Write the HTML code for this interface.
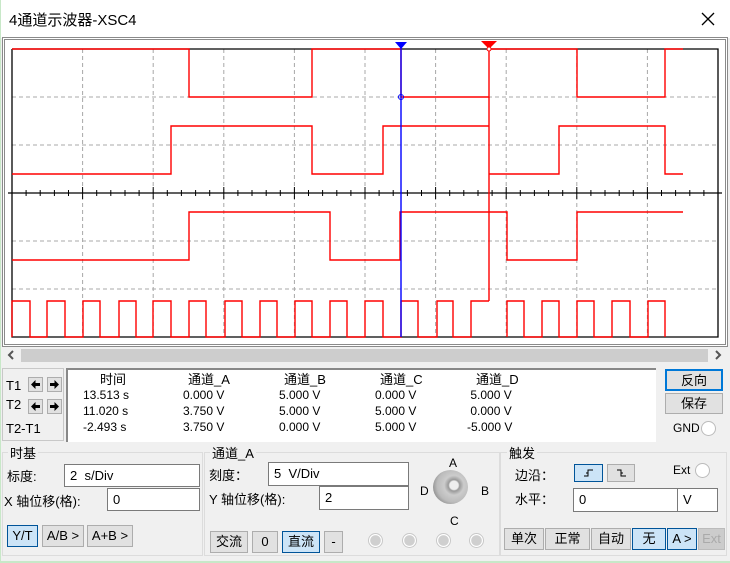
<!DOCTYPE html>
<html><head><meta charset="utf-8"><style>
*{margin:0;padding:0;box-sizing:border-box}
body{width:730px;height:563px;background:#f0f0f0;font-family:"Liberation Sans","Noto Sans CJK SC",sans-serif;font-size:13px;color:#000;position:relative;overflow:hidden}
.a{position:absolute;white-space:nowrap}
.btn{position:absolute;background:#e1e1e1;border:1px solid #adadad;text-align:center;font-size:13px;line-height:20px}
.blue{background:#cce4f7;border-color:#005499}
.inp{position:absolute;background:#fff;border:1px solid #7a7a7a;padding-left:5px;font-size:13px}
.grp{position:absolute;border:1px solid #dcdcdc}
.rad{position:absolute;width:15px;height:15px;border-radius:50%;border:1px solid #bbb;background:#fff}
.dot{position:absolute;width:15px;height:15px;border-radius:50%;border:1px solid #c8c8c8;background:radial-gradient(#cfcfcf 55%,#fff 60%)}
.ab svg{display:block;margin:1px auto}
</style></head><body>
<div class="a" style="left:0;top:0;width:730px;height:38px;background:#fff"></div>
<div class="a" style="left:0;top:0;width:1px;height:563px;background:#c8e8c8"></div>
<div class="a" style="left:9px;top:9px;font-size:15px">4通道示波器-XSC4</div>
<svg class="a" style="left:700px;top:11px" width="16" height="16"><path d="M2 2L14 14M14 2L2 14" stroke="#000" stroke-width="1.3"/></svg>

<div class="a" style="left:2px;top:37px;width:726px;height:310px;border:3px double #8a8a8a;background:#fff"></div>
<svg class="a" style="left:0;top:0" width="730" height="350">
<g stroke="#a8a8a8" stroke-dasharray="4,3" stroke-width="1">
<path d="M82.6 49V337M153.2 49V337M223.8 49V337M294.4 49V337M365 49V337M435.6 49V337M506.2 49V337M576.8 49V337M647.4 49V337"/>
<path d="M12 97H718M12 145H718M12 241H718M12 289H718"/>
</g>
<g stroke="#000" stroke-width="1.3" fill="none">
<path d="M12 49H718V337H12V49"/>
<path d="M8 193H722"/>
</g>
<g stroke="#000" stroke-width="1">
<path d="M26.1 190V196M40.2 190V196M54.4 190V196M68.5 190V196M82.6 187V199M96.7 190V196M110.8 190V196M125 190V196M139.1 190V196M153.2 187V199M167.3 190V196M181.4 190V196M195.6 190V196M209.7 190V196M223.8 187V199M237.9 190V196M252 190V196M266.2 190V196M280.3 190V196M294.4 187V199M308.5 190V196M322.6 190V196M336.8 190V196M350.9 190V196M365 187V199M379.1 190V196M393.2 190V196M407.4 190V196M421.5 190V196M435.6 187V199M449.7 190V196M463.8 190V196M478 190V196M492.1 190V196M506.2 187V199M520.3 190V196M534.4 190V196M548.6 190V196M562.7 190V196M576.8 187V199M590.9 190V196M605 190V196M619.2 190V196M633.3 190V196M647.4 187V199M661.5 190V196M675.6 190V196M689.8 190V196M703.9 190V196"/>
</g>
<g stroke="#f00" stroke-width="1.4" fill="none">
<path d="M12 49H189V97H312V49H401V97H489V49H577V97H665V49H683"/>
<path d="M12 174H171V126H312V174H383V126H489"/>
<path d="M489 97V301M489 174H559V126H665V174H683"/>
<path d="M12 260H189V212H330V260H400V212H507V260H577V212H683"/>
<path d="M12 337V301H30V337H47V301H65V337H83V301H100V337H119V301H136V337H153V301H171V337H189V301H206V337H225V301H242V337H260V301H277V337H295V301H312V337H330V301H347V337H365V301H383V337H401V301H418V337H437V301H453V337H471V301H489M507 337V301H524V337H542V301H559V337H577V301H594V337H612V301H630V337H648V301H665V337"/>
</g>
<path d="M401 44V337" stroke="#00f" stroke-width="1.4"/>
<circle cx="401" cy="97" r="2.5" fill="none" stroke="#00f"/>
<path d="M395 42H407L401 49Z" fill="#00f"/>
<path d="M481 41H497L489 49Z" fill="#f00"/>
<circle cx="489" cy="49" r="2" fill="#fff" stroke="#f00"/>
</svg>

<div class="a" style="left:2px;top:348px;width:726px;height:16px;background:#f0f0f0"></div>
<div class="a" style="left:21px;top:349px;width:687px;height:13px;background:#cdcdcd"></div>
<svg class="a" style="left:6px;top:350px" width="10" height="10"><path d="M7 1L3 5L7 9" stroke="#555" stroke-width="2" fill="none"/></svg>
<svg class="a" style="left:713px;top:350px" width="10" height="10"><path d="M3 1L7 5L3 9" stroke="#555" stroke-width="2" fill="none"/></svg>

<div class="a" style="left:2px;top:368px;width:62px;height:73px;border:1px solid #c8c8c8"></div>
<div class="a" style="left:6px;top:378px">T1</div>
<div class="a" style="left:6px;top:397px">T2</div>
<div class="a" style="left:6px;top:421px">T2-T1</div>
<div class="btn ab" style="left:28px;top:377px;width:15px;height:15px"><svg width="11" height="11"><path d="M1 5.5L5.5 1V4H10V7H5.5V10Z"/></svg></div>
<div class="btn ab" style="left:47px;top:377px;width:15px;height:15px"><svg width="11" height="11"><path d="M10 5.5L5.5 1V4H1V7H5.5V10Z"/></svg></div>
<div class="btn ab" style="left:28px;top:399px;width:15px;height:15px"><svg width="11" height="11"><path d="M1 5.5L5.5 1V4H10V7H5.5V10Z"/></svg></div>
<div class="btn ab" style="left:47px;top:399px;width:15px;height:15px"><svg width="11" height="11"><path d="M10 5.5L5.5 1V4H1V7H5.5V10Z"/></svg></div>
<div class="a" style="left:66px;top:368px;width:590px;height:74px;background:#fff;border-top:2px solid #888;border-left:2px solid #888"></div>
<div class="a" style="left:100px;top:369px">时间</div>
<div class="a" style="left:188px;top:369px">通道_A</div>
<div class="a" style="left:284px;top:369px">通道_B</div>
<div class="a" style="left:380px;top:369px">通道_C</div>
<div class="a" style="left:476px;top:369px">通道_D</div>
<div class="a" style="left:83px;top:387px;font-size:12px;line-height:16px">13.513 s<br>11.020 s<br>-2.493 s</div>
<div class="a" style="left:183px;top:387px;font-size:12px;line-height:16px">0.000 V<br>3.750 V<br>3.750 V</div>
<div class="a" style="left:279px;top:387px;font-size:12px;line-height:16px">5.000 V<br>5.000 V<br>0.000 V</div>
<div class="a" style="left:375px;top:387px;font-size:12px;line-height:16px">0.000 V<br>5.000 V<br>5.000 V</div>
<div class="a" style="left:467px;top:387px;font-size:12px;line-height:16px">&nbsp;5.000 V<br>&nbsp;0.000 V<br>-5.000 V</div>
<div class="btn" style="left:665px;top:369px;width:58px;height:22px;border:2px solid #0078d7">反向</div>
<div class="btn" style="left:665px;top:393px;width:58px;height:21px">保存</div>
<div class="a" style="left:673px;top:421px;font-size:12px">GND</div>
<div class="rad" style="left:701px;top:421px"></div>

<div class="grp" style="left:2px;top:452px;width:201px;height:104px"></div>
<div class="a" style="left:8px;top:443px;background:#f0f0f0;padding:0 2px">时基</div>
<div class="a" style="left:7px;top:466px">标度:</div>
<div class="inp" style="left:64px;top:464px;width:136px;height:23px;line-height:21px">2&nbsp; s/Div</div>
<div class="a" style="left:4px;top:491px">X 轴位移(格):</div>
<div class="inp" style="left:107px;top:488px;width:93px;height:23px;line-height:21px">0</div>
<div class="btn blue" style="left:7px;top:525px;width:31px;height:22px">Y/T</div>
<div class="btn" style="left:42px;top:525px;width:42px;height:22px">A/B &gt;</div>
<div class="btn" style="left:87px;top:525px;width:46px;height:22px">A+B &gt;</div>

<div class="grp" style="left:204px;top:452px;width:296px;height:104px"></div>
<div class="a" style="left:210px;top:443px;background:#f0f0f0;padding:0 2px">通道_A</div>
<div class="a" style="left:209px;top:465px">刻度：</div>
<div class="inp" style="left:268px;top:462px;width:141px;height:24px;line-height:22px">5&nbsp; V/Div</div>
<div class="a" style="left:209px;top:489px">Y 轴位移(格):</div>
<div class="inp" style="left:319px;top:486px;width:90px;height:24px;line-height:22px">2</div>
<div class="a" style="left:449px;top:456px;font-size:12px">A</div>
<div class="a" style="left:420px;top:484px;font-size:12px">D</div>
<div class="a" style="left:481px;top:484px;font-size:12px">B</div>
<div class="a" style="left:450px;top:514px;font-size:12px">C</div>
<div class="a" style="left:433px;top:470px;width:35px;height:34px;border-radius:50%;background:radial-gradient(circle at 60% 45%,#eee 15%,#999 20%,#ccc 35%,#bbb 60%,#666 95%)"></div>
<div class="btn" style="left:210px;top:531px;width:38px;height:22px">交流</div>
<div class="btn" style="left:252px;top:531px;width:26px;height:22px">0</div>
<div class="btn blue" style="left:282px;top:531px;width:38px;height:22px">直流</div>
<div class="btn" style="left:324px;top:531px;width:19px;height:22px">-</div>
<div class="dot" style="left:368px;top:533px"></div>
<div class="dot" style="left:402px;top:533px"></div>
<div class="dot" style="left:436px;top:533px"></div>
<div class="dot" style="left:469px;top:533px"></div>

<div class="grp" style="left:500px;top:452px;width:227px;height:104px"></div>
<div class="a" style="left:507px;top:443px;background:#f0f0f0;padding:0 2px">触发</div>
<div class="a" style="left:515px;top:465px">边沿：</div>
<div class="btn blue" style="left:574px;top:464px;width:29px;height:18px"><svg width="27" height="16" style="display:block"><path d="M9 11H13V5H18M13 8H11" stroke="#000" fill="none"/></svg></div>
<div class="btn" style="left:607px;top:464px;width:28px;height:18px"><svg width="26" height="16" style="display:block"><path d="M9 5H13V11H18M13 8H15" stroke="#000" fill="none"/></svg></div>
<div class="a" style="left:673px;top:463px;font-size:12px">Ext</div>
<div class="rad" style="left:695px;top:463px"></div>
<div class="a" style="left:515px;top:489px">水平：</div>
<div class="inp" style="left:573px;top:488px;width:105px;height:24px;line-height:22px">0</div>
<div class="inp" style="left:677px;top:488px;width:41px;height:24px;line-height:22px">V</div>
<div class="btn" style="left:504px;top:528px;width:40px;height:22px">单次</div>
<div class="btn" style="left:545px;top:528px;width:45px;height:22px">正常</div>
<div class="btn" style="left:591px;top:528px;width:40px;height:22px">自动</div>
<div class="btn blue" style="left:632px;top:528px;width:34px;height:22px">无</div>
<div class="btn blue" style="left:667px;top:528px;width:30px;height:22px">A &gt;</div>
<div class="btn" style="left:698px;top:528px;width:27px;height:22px;color:#aaa;background:#ccc;border-color:#bbb">Ext</div>
<div class="a" style="left:0;top:561px;width:730px;height:2px;background:#c8e8c8"></div>
</body></html>
